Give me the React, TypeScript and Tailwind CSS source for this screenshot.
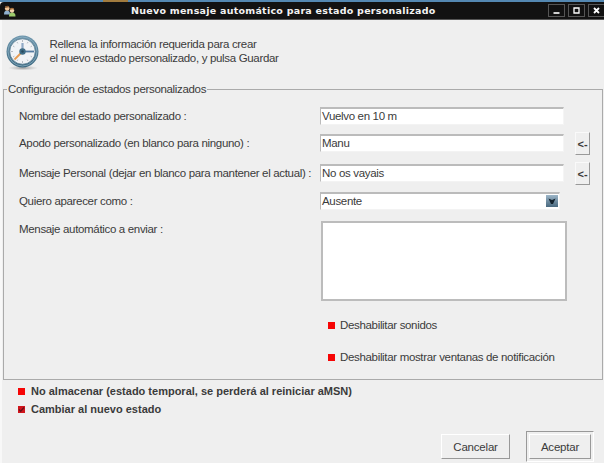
import type { ReactNode } from 'react';

function TitleButton({ children }: { children: ReactNode }) {
  return (
    <div className="flex h-[13px] w-[17px] shrink-0 items-center justify-center border border-[#555] bg-[#111]">
      <svg width="9" height="9" viewBox="0 0 9 9" fill="none" stroke="#fff">
        {children}
      </svg>
    </div>
  );
}

function PeopleIcon() {
  return (
    <svg width="12" height="12" viewBox="0 0 12 12">
      <path d="M0 9.500c0-3 1-4 3-4s3 1 3 4z" fill="#8fb0cf" />
      <circle cx="3.200" cy="3.400" r="2.300" fill="#f0c79a" />
      <path d="M1 3c0-3 4.500-3 4.500 0L4.500 2.200z" fill="#8a5a32" />
      <path d="M5 11.500c0-3 1-4 3.200-4s3.300 1 3.300 4z" fill="#9ccb6c" />
      <circle cx="8" cy="5.500" r="2.200" fill="#f3d3ac" />
      <path d="M5.800 5c0-3 4.400-3 4.400 0L9 4.200z" fill="#a8713c" />
    </svg>
  );
}

function ClockIcon() {
  return (
    <svg width="34" height="36" viewBox="0 0 34 36">
      <defs>
        <linearGradient id="rim" x1="0" y1="0" x2="0" y2="1">
          <stop offset="0" stopColor="#6e96ad" />
          <stop offset="1" stopColor="#3a677f" />
        </linearGradient>
        <radialGradient id="shade">
          <stop offset="0" stopColor="#777" stopOpacity=".7" />
          <stop offset="1" stopColor="#999" stopOpacity="0" />
        </radialGradient>
      </defs>
      <ellipse cx="17" cy="33" rx="15" ry="2.500" fill="url(#shade)" />
      <circle cx="16.500" cy="16.500" r="16" fill="url(#rim)" />
      <circle cx="16.500" cy="16.500" r="14.500" fill="none" stroke="#8fb2c5" strokeWidth=".8" />
      <circle cx="16.500" cy="16.500" r="12.700" fill="#f1f3f6" stroke="#54788e" strokeWidth=".7" />
      <path
        d="M16.500 5v2M16.500 26v2M5 16.500h2M11 7l.8 1.400M22 7l-.8 1.400M7 11l1.400.8M26 11l-1.400.8M7 22l1.400-.8M26 22l-1.400-.8M22 26l-.8-1.400M11 26l.8-1.400"
        stroke="#b4bac2"
      />
      <path d="M16 17l-7.500 7.500" stroke="#e69a50" strokeWidth="1.800" />
      <path d="M16.500 16.500V8" stroke="#8fa9c6" strokeWidth="2.200" />
      <path d="M16.500 16.500H28" stroke="#547aa0" strokeWidth="1.800" />
      <circle cx="16.500" cy="16.500" r="3.200" fill="#3f6c86" />
      <circle cx="16.500" cy="16.500" r="1.200" fill="#27495e" />
    </svg>
  );
}

function Field({ value }: { value: string }) {
  return (
    <div className="h-[18px] w-[244px] border border-t-2 border-t-[#bbb] border-r-[#f5f5f5] border-b-[#f3f3f3] border-l-[#bbb] bg-white pl-px leading-[15px]">
      {value}
    </div>
  );
}

function ArrowButton() {
  return (
    <div className="-mt-[2px] ml-[11px] flex h-[23px] w-[15px] items-center justify-center border border-t-[#fafafa] border-r-[#999] border-b-[#999] border-l-[#fafafa] text-[11px] font-bold tracking-normal">
      &lt;-
    </div>
  );
}

function Box({ checked = false }: { checked?: boolean }) {
  return (
    <span className={checked ? 'block size-[7px] bg-[#d0141b]' : 'block size-[7px] bg-[#f60505]'}>
      {checked && (
        <svg width="7" height="7" viewBox="0 0 7 7" className="block">
          <path d="M1 3.300l1.700 2L6 1.500" fill="none" stroke="#6b101a" strokeWidth="1.300" />
        </svg>
      )}
    </span>
  );
}

function Row({ label, className, children }: { label: ReactNode; className: string; children: ReactNode }) {
  return (
    <div className={`flex items-start pl-[15px] ${className}`}>
      <div className="w-[301px] shrink-0 pt-[2px]">{label}</div>
      {children}
    </div>
  );
}

export default function App() {
  return (
    <div className="flex h-[463px] w-[604px] flex-col overflow-hidden bg-[#efefef] font-['Liberation_Sans',Arial,sans-serif] text-[11.5px] leading-[14px] tracking-[-0.33px] whitespace-nowrap text-[#3b3b3b]">
      <div className="flex h-[2px] shrink-0 bg-[#5488b2]">
        <div className="ml-[103px] w-[25px] bg-[#a17b3e]" />
      </div>
      <header className="flex h-[18px] shrink-0 items-center rounded-tl-[4px] border-b border-[#555] bg-[#121212]">
        <div className="w-[131px] shrink-0 pl-[4px]">
          <PeopleIcon />
        </div>
        <h1 className="w-[417px] shrink-0 font-['DejaVu_Sans',sans-serif] text-[9.5px] font-bold tracking-[0.26px] text-[#f2f2f2]">
          Nuevo mensaje automático para estado personalizado
        </h1>
        <div className="flex gap-[3px]">
          <TitleButton>
            <path d="M1.500 7h6" strokeWidth="1.600" />
          </TitleButton>
          <TitleButton>
            <path d="M2 2h5v5H2z" strokeWidth="1.300" />
          </TitleButton>
          <TitleButton>
            <path d="M2 2l5 5M7 2l-5 5" strokeWidth="1.800" />
          </TitleButton>
        </div>
      </header>

      <main className="flex grow flex-col border-l-2 border-[#f8f8f8]">
        <div className="flex h-[69px] pt-[15px] pl-[4px]">
          <ClockIcon />
          <p className="ml-[9.5px] pt-[2px] leading-[14px]">
            Rellena la información requerida para crear
            <br />
            el nuevo estado personalizado, y pulsa Guardar
          </p>
        </div>

        <section className="mr-px ml-px h-[291px] border border-[#aaa]">
          <h2 className="-mt-[8px] mb-[11px] ml-[3px] w-fit bg-[#efefef] px-px">
            Configuración de estados personalizados
          </h2>
          <Row label="Nombre del estado personalizado :" className="h-[27px]">
            <Field value="Vuelvo en 10 m" />
          </Row>
          <Row label="Apodo personalizado (en blanco para ninguno) :" className="h-[30px]">
            <Field value="Manu" />
            <ArrowButton />
          </Row>
          <Row label="Mensaje Personal (dejar en blanco para mantener el actual) :" className="h-[28px]">
            <Field value="No os vayais" />
            <ArrowButton />
          </Row>
          <Row label="Quiero aparecer como :" className="h-[28px]">
            <div className="flex h-[18px] w-[240px] justify-between border border-t-2 border-t-[#bbb] border-r-[#f5f5f5] border-b-[#f3f3f3] border-l-[#bbb] bg-white px-px leading-[15px]">
              Ausente
              <div className="mt-px flex size-[12px] items-center justify-center bg-linear-to-b from-[#9db6c8] to-[#49697f]">
                <svg width="8" height="7" viewBox="0 0 8 7">
                  <path d="M.5.5L4 2l3.500-1.500L5 6H3z" fill="#14232e" />
                </svg>
              </div>
            </div>
          </Row>
          <Row label="Mensaje automático a enviar :" className="h-[98px]">
            <div className="mt-px ml-px h-[80px] w-[246px] border-2 border-[#bcbcbc] bg-white" />
          </Row>
          <div className="ml-[324px] flex h-[14px] items-center gap-[5px]">
            <Box />
            Deshabilitar sonidos
          </div>
          <div className="mt-[18px] ml-[324px] flex h-[14px] items-center gap-[5px]">
            <Box />
            Deshabilitar mostrar ventanas de notificación
          </div>
        </section>

        <div className="mt-[4px] ml-[16px] flex flex-col gap-[4px] text-[11px] leading-[14px] font-bold tracking-normal">
          <div className="flex items-center gap-[6px]">
            <Box />
            No almacenar (estado temporal, se perderá al reiniciar aMSN)
          </div>
          <div className="flex items-center gap-[6px]">
            <Box checked />
            Cambiar al nuevo estado
          </div>
        </div>

        <div className="mt-[15px] mr-[10px] flex items-center justify-end gap-[16px] tracking-[-0.2px]">
          <button className="h-[25px] w-[69px] border border-t-white border-r-[#999] border-b-[#999] border-l-white">
            Cancelar
          </button>
          <div className="border border-t-[#999] border-r-white border-b-white border-l-[#999] p-[2px]">
            <button className="h-[25px] w-[62px] border border-t-white border-r-[#999] border-b-[#999] border-l-white">
              Aceptar
            </button>
          </div>
        </div>
      </main>
    </div>
  );
}
